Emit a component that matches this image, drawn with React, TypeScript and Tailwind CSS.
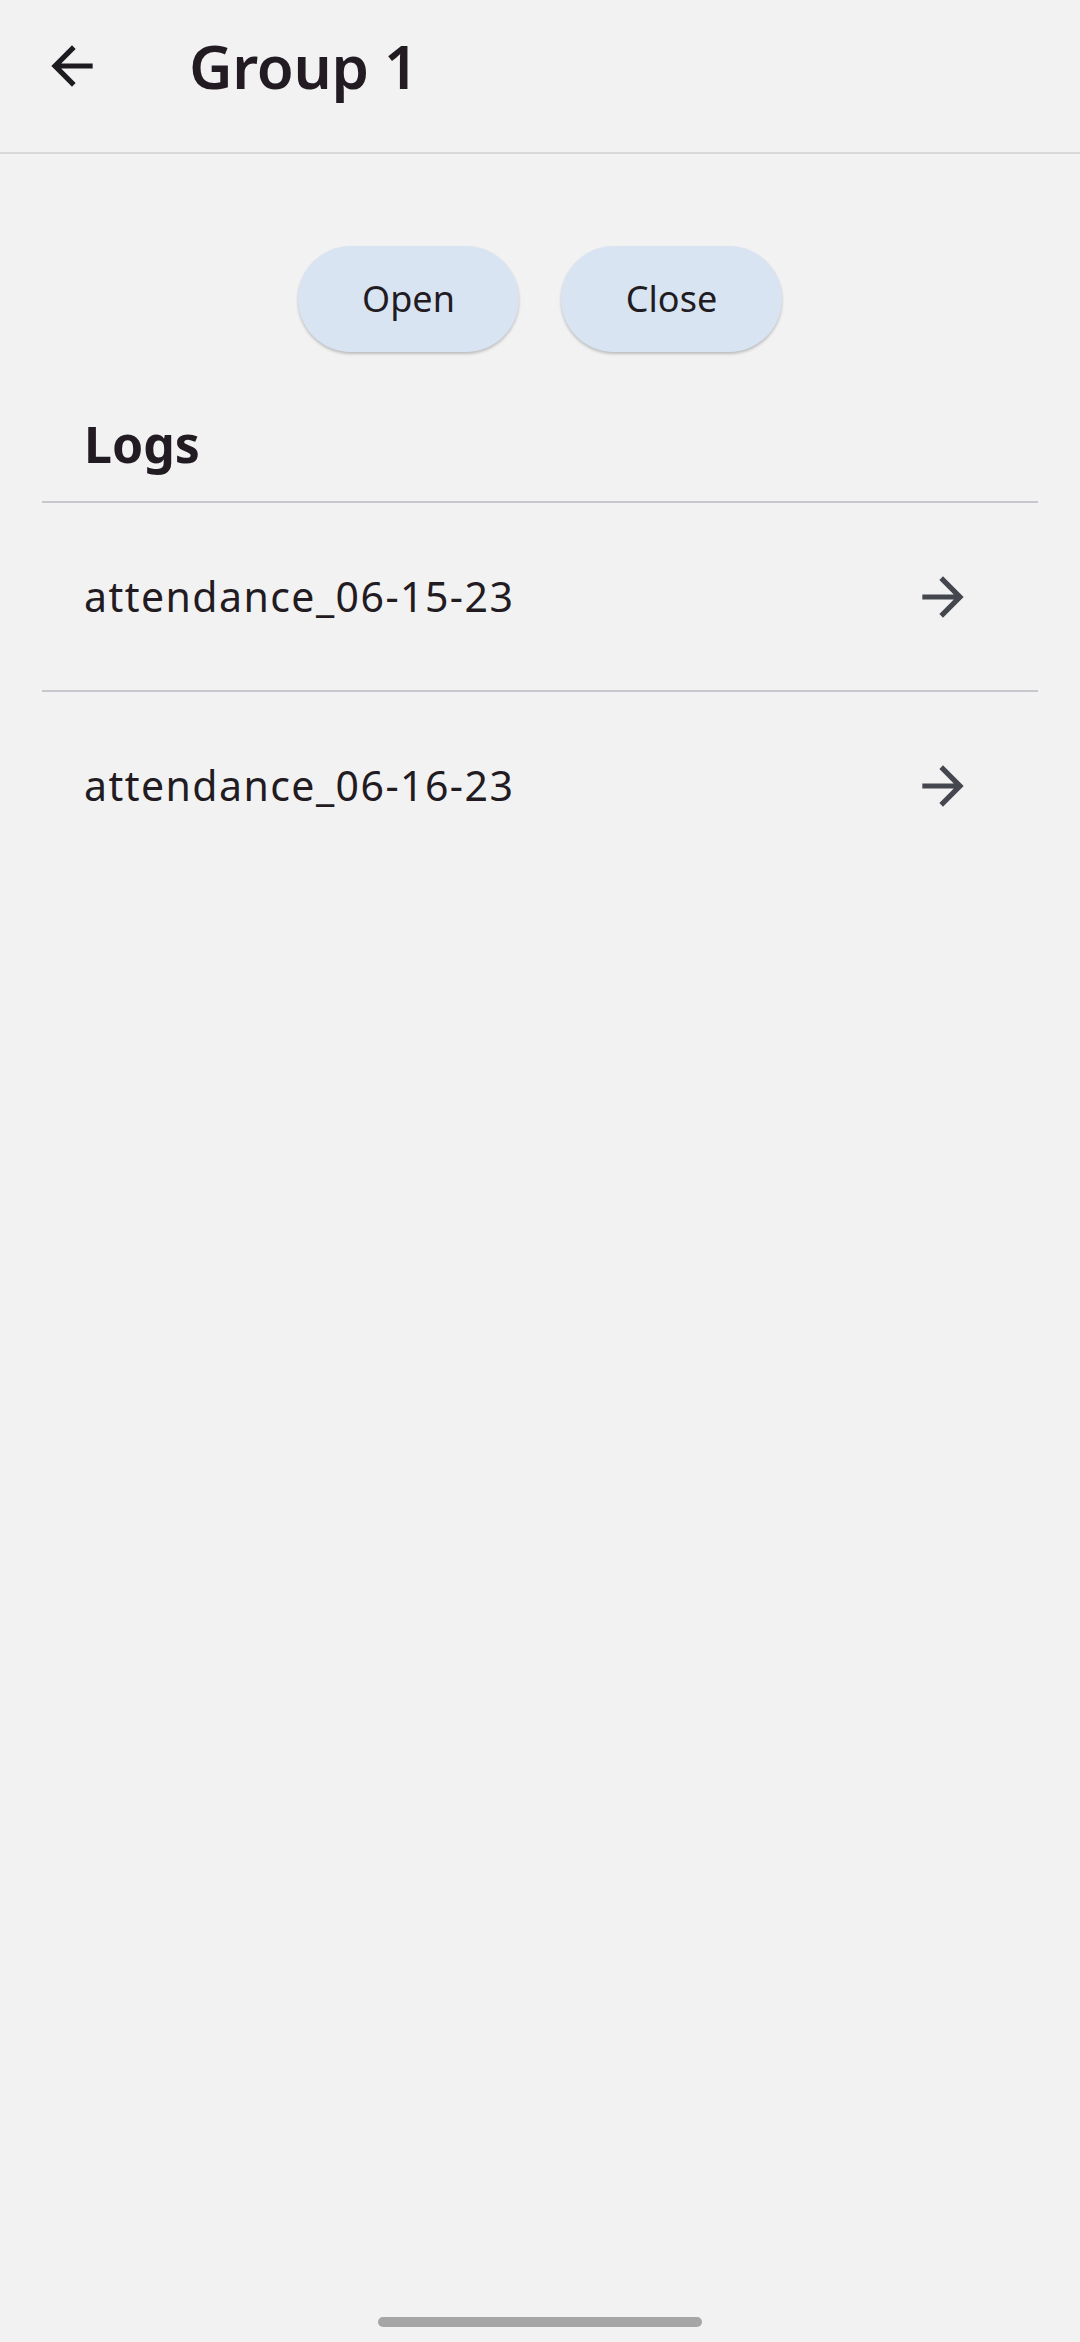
import React from "react";

function BackArrow() {
  return (
    <svg width="62" height="62" viewBox="0 0 24 24" fill="#1d1b20">
      <path d="M20 11H7.83l5.59-5.59L12 4l-8 8 8 8 1.41-1.41L7.83 13H20v-2z" />
    </svg>
  );
}

function FwdArrow() {
  return (
    <svg width="62" height="62" viewBox="0 0 24 24" fill="#44474e">
      <path d="M12 4l-1.41 1.41L16.17 11H4v2h12.17l-5.58 5.59L12 20l8-8z" />
    </svg>
  );
}

export default function App() {
  const logs = ["attendance_06-15-23", "attendance_06-16-23"];
  return (
    <div
      className="w-[1080px] h-[2342px] bg-[#f2f2f2] flex flex-col relative overflow-hidden"
      style={{ fontFamily: '"Noto Sans", "Open Sans", sans-serif' }}
    >
      <header className="h-[154px] border-b-2 border-[#d9d9d9]">
        <div className="h-[132px] flex items-center">
          <div className="ml-[41px] w-[62px] h-[62px] flex items-center justify-center">
            <BackArrow />
          </div>
          <h1 className="ml-[86px] text-[60px] font-semibold text-[#221b22] leading-none tracking-[-0.3px]">
            Group 1
          </h1>
        </div>
      </header>

      <div className="flex justify-center gap-[42px] mt-[92px]">
        <button className="w-[221px] h-[106px] rounded-full bg-[#d9e4f2] text-[36px] text-[#221b22] shadow-[0_2px_3px_rgba(0,0,0,0.22)]">
          Open
        </button>
        <button className="w-[221px] h-[106px] rounded-full bg-[#d9e4f2] text-[36px] text-[#221b22] shadow-[0_2px_3px_rgba(0,0,0,0.22)]">
          Close
        </button>
      </div>

      <div className="mx-[42px] mt-[58px]">
        <h2 className="pl-[42px] pb-[24px] text-[50px] font-bold text-[#221b22] leading-none h-[91px] flex items-center">
          Logs
        </h2>
        {logs.map((l) => (
          <div
            key={l}
            className="h-[189px] border-t-2 border-[#c6c8cd] flex items-center justify-between pl-[42px] pr-[64px]"
          >
            <span className="text-[41px] text-[#221b22] tracking-[1.45px]">{l}</span>
            <FwdArrow />
          </div>
        ))}
      </div>

      <div className="absolute left-[378px] top-[2317px] w-[324px] h-[10px] rounded-full bg-[#a6a6a6]" />
    </div>
  );
}
